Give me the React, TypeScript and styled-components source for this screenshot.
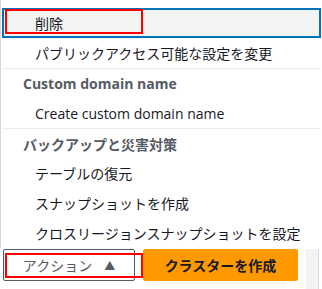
import React from 'react';
import styled, { createGlobalStyle } from 'styled-components';

const GlobalStyle = createGlobalStyle`
  html, body {
    margin: 0;
    padding: 0;
    background: #fff;
  }
  body {
    font-family: 'Open Sans', 'Noto Sans CJK JP', sans-serif;
    font-size: 14px;
    color: #16191f;
  }
`;

const Screen = styled.div`
  position: relative;
  width: 322px;
  height: 289px;
  overflow: hidden;
  display: flex;
  flex-direction: column;
  background: #fff;
`;

const Menu = styled.ul`
  list-style: none;
  margin: 0;
  padding: 8px 1px 0 1px;
  border-left: 1px solid #d5dbdb;
  display: flex;
  flex-direction: column;
`;

const Item = styled.li<{ $active?: boolean }>`
  box-sizing: border-box;
  height: 30px;
  display: flex;
  align-items: center;
  padding-left: 31px;
  border: 2px solid ${(p) => (p.$active ? '#0073bb' : 'transparent')};
  background: ${(p) => (p.$active ? '#f2f3f3' : 'transparent')};
  color: #16191f;
  white-space: nowrap;
`;

const GroupHeader = styled.li`
  box-sizing: border-box;
  height: 30px;
  display: flex;
  align-items: center;
  padding-left: 21px;
  border-top: 1px solid #eaeded;
  font-weight: 700;
  color: #545b64;
  white-space: nowrap;
`;

const ButtonRow = styled.div`
  display: flex;
  align-items: flex-start;
  gap: 8px;
  padding: 1px 0 0 3px;
  flex: 1;
`;

const ActionButton = styled.button`
  box-sizing: border-box;
  width: 132px;
  height: 32px;
  display: flex;
  align-items: center;
  justify-content: center;
  gap: 12px;
  border: 1px solid #545b64;
  border-radius: 2px;
  background: #fff;
  color: #545b64;
  font: inherit;
  font-weight: 400;
  padding: 0;
`;

const Caret = styled.span`
  font-size: 11px;
  line-height: 1;
  color: #545b64;
`;

const PrimaryButton = styled.button`
  box-sizing: border-box;
  width: 155px;
  height: 32px;
  border: 1px solid #ff9900;
  border-radius: 2px;
  background: #ff9900;
  color: #16191f;
  font: inherit;
  font-weight: 700;
  padding: 0;
`;

const Backdrop = styled.div`
  flex: 1;
  align-self: stretch;
  background: #f2f3f3;
  border-right: 1px solid #d5dbdb;
  margin-right: 3px;
`;

const Annotation = styled.div<{ $top: number }>`
  position: absolute;
  left: 5px;
  top: ${(p) => p.$top}px;
  width: 138px;
  height: 25px;
  box-sizing: border-box;
  border: 2px solid #f00;
  pointer-events: none;
`;

const App = () => (
  <>
    <GlobalStyle />
    <Screen>
      <Menu>
        <Item $active>削除</Item>
        <Item>パブリックアクセス可能な設定を変更</Item>
        <GroupHeader>Custom domain name</GroupHeader>
        <Item>Create custom domain name</Item>
        <GroupHeader>バックアップと災害対策</GroupHeader>
        <Item>テーブルの復元</Item>
        <Item>スナップショットを作成</Item>
        <Item>クロスリージョンスナップショットを設定</Item>
      </Menu>
      <ButtonRow>
        <ActionButton type="button">
          アクション<Caret>▲</Caret>
        </ActionButton>
        <PrimaryButton type="button">クラスターを作成</PrimaryButton>
        <Backdrop />
      </ButtonRow>
      <Annotation $top={9} />
      <Annotation $top={253} />
    </Screen>
  </>
);

export default App;
